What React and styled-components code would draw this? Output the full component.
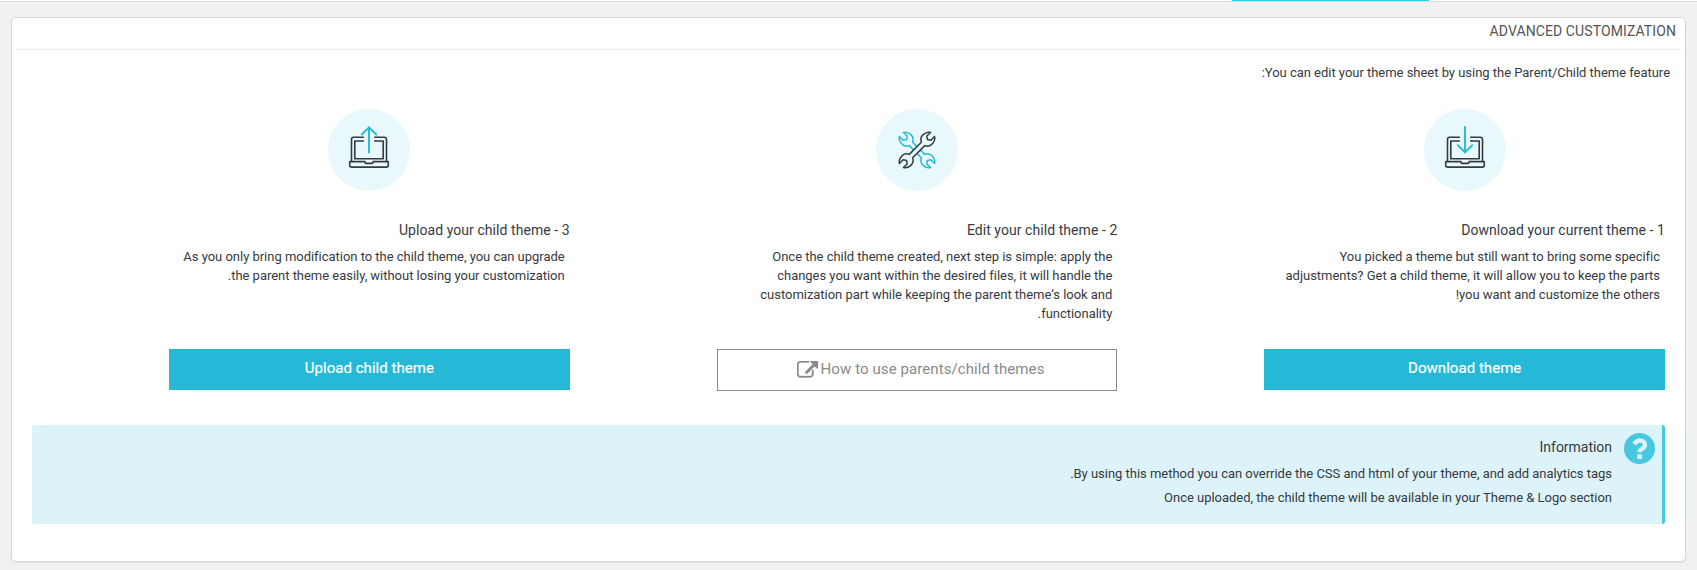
import React from "react";
import styled, { createGlobalStyle } from "styled-components";

const GlobalStyle = createGlobalStyle`
  *, *::before, *::after { box-sizing: border-box; }
  body {
    margin: 0;
    background: #eff1f2;
    color: #363a41;
    font: 400 13px/19px Roboto, "Open Sans", sans-serif;
    letter-spacing: -0.025px;
  }
  h2, h3, h4, p { margin: 0; font-weight: 400; }
`;

const Page = styled.div`
  height: 570px;
  overflow: hidden;
`;

const TabStrip = styled.div`
  height: 2px;
  background: #fff;
  border-bottom: 1px solid #d9dddd;
  padding-right: 268px;
`;

const ActiveTab = styled.div`
  width: 197px;
  height: 1px;
  background: #25d0f0;
`;

const Panel = styled.section`
  height: 545px;
  margin: 15px 11px 0;
  padding: 0 4px;
  background: #fff;
  border: 1px solid #d3d8db;
  border-radius: 5px;
  box-shadow: 0 1px 1px rgba(0, 0, 0, 0.05);
`;

const PanelHeading = styled.h2`
  height: 32px;
  padding: 0 5px;
  border-bottom: 1px solid #eaedef;
  font-size: 14px;
  line-height: 27px;
  letter-spacing: 0.1px;
  color: #555;
  text-transform: uppercase;
`;

const Intro = styled.p`
  padding: 13px 11px 0;
  margin-bottom: 27px;
`;

const Steps = styled.div`
  display: grid;
  grid-template-columns: repeat(3, 1fr);
  padding: 0 6px 0 16px;
`;

const Step = styled.article`
  display: flex;
  flex-direction: column;
  padding: 0 10px 0 137px;
`;

const IconCircle = styled.div`
  align-self: center;
  width: 82px;
  height: 82px;
  border-radius: 50%;
  background: #e8f8fb;
  svg { display: block; }
`;

const StepTitle = styled.h3`
  margin-top: 29px;
  font-size: 14px;
  line-height: 20px;
  letter-spacing: 0.06px;
`;

const StepText = styled.p`
  height: 76px;
  margin: 7px 0 26px;
  padding: 0 5px;
`;

const Button = styled.a`
  display: flex;
  align-items: center;
  justify-content: center;
  gap: 3px;
  height: ${(p) => (p.$outline ? 42 : 41)}px;
  padding: ${(p) => (p.$outline ? "0 0 1px 7px" : "0 0 3px")};
  font-size: 15px;
  letter-spacing: ${(p) => (p.$outline ? 0.09 : 0.04)}px;
  color: ${(p) => (p.$outline ? "#8a8a8a" : "#fff")};
  background: ${(p) => (p.$outline ? "#fff" : "#25b9d7")};
  border: ${(p) => (p.$outline ? "1px solid #8a8a8a" : "0")};
  -webkit-text-stroke: ${(p) => (p.$outline ? "0" : "0.2px #fff")};
`;

const Info = styled.aside`
  display: flex;
  height: 99px;
  margin: 34px 16px 0;
  padding: 8px 7px;
  gap: 12px;
  background: #dcf3f9;
  border-right: 3px solid #4ac7e0;
  border-radius: 3px;
`;

const InfoBody = styled.div`
  padding-top: 4px;
  p { line-height: 24px; }
`;

const InfoTitle = styled.h4`
  font-size: 14px;
  line-height: 20px;
  margin-bottom: 5px;
`;

function Laptop({ up }) {
  return (
    <svg width="82" height="82" viewBox="9 9 82 82" fill="none" strokeLinecap="round" strokeLinejoin="round">
      <g stroke="#363a41" strokeWidth="1.6">
        <path d="M44.3 37.3H34.7Q32.5 37.3 32.5 39.5V61.5M55.7 37.3H65.3Q67.5 37.3 67.5 39.5V61.5" />
        <path d="M44.3 41H35.8V58.7H64.2V41H55.7" />
        <path d="M30.7 61.6H46V62.3Q46 63.4 47.2 63.4H52.8Q54 63.4 54 62.3V61.6H69.3V65.2Q69.3 67.1 67.4 67.1H32.6Q30.7 67.1 30.7 65.2Z" />
      </g>
      <path stroke="#25b9d7" strokeWidth="1.9" d={up ? "M50 52.5V27.3M42.8 34.5L50 27.3L57.2 34.5" : "M50 27V52.4M42.8 45.2L50 52.4L57.2 45.2"} />
    </svg>
  );
}

const WRENCH =
  "M-8.6 -2.4H8.6C9.8 -5 12.3 -6.7 15.2 -6.5C18.3 -6.3 20.8 -5 22 -2.8L16.8 -2.9L14.8 0L16.8 2.9L22 2.8C20.8 5 18.3 6.3 15.2 6.5C12.3 6.7 9.8 5 8.6 2.4H-8.6C-9.8 5 -12.3 6.7 -15.2 6.5C-18.3 6.3 -20.8 5 -22 2.8L-16.8 2.9L-14.8 0L-16.8 -2.9L-22 -2.8C-20.8 -5 -18.3 -6.3 -15.2 -6.5C-12.3 -6.7 -9.8 -5 -8.6 -2.4Z";

function Wrenches() {
  return (
    <svg width="82" height="82" viewBox="-41 -41 82 82" fill="#e8f8fb" strokeWidth="1.5" strokeLinejoin="round">
      <path d={WRENCH} transform="rotate(45)" stroke="#25b9d7" />
      <path d={WRENCH} transform="rotate(-45)" stroke="#363a41" />
    </svg>
  );
}

function ExternalLink() {
  return (
    <svg width="21" height="18" viewBox="0 0 1792 1536" fill="currentColor">
      <path d="M1408 800v320q0 119-84.500 203.500t-203.500 84.500h-832q-119 0-203.500-84.500t-84.500-203.500v-832q0-119 84.500-203.500t203.500-84.500h704q14 0 23 9t9 23v64q0 14-9 23t-23 9h-704q-66 0-113 47t-47 113v832q0 66 47 113t113 47h832q66 0 113-47t47-113v-320q0-14 9-23t23-9h64q14 0 23 9t9 23zm384-736v512q0 26-19 45t-45 19-45-19l-176-176-652 652q-10 10-23 10t-23-10l-114-114q-10-10-10-23t10-23l652-652-176-176q-19-19-19-45t19-45 45-19h512q26 0 45 19t19 45z" stroke="currentColor" strokeWidth="30" />
    </svg>
  );
}

function Help() {
  return (
    <svg width="31" height="31" viewBox="0 0 31 31">
      <circle cx="15.500" cy="15.500" r="15.500" fill="#4ac7e0" />
      <path d="M10.300 11.200C11.700 8.800 13.400 7.500 15.800 7.500C18.600 7.500 21 9.400 21 12C21 15.700 15.600 15.500 15.600 19.300" fill="none" stroke="#dcf3f9" strokeWidth="4.400" />
      <rect x="13.300" y="21.300" width="4.700" height="4.700" rx=".5" fill="#dcf3f9" />
    </svg>
  );
}

export default function App() {
  return (
    <Page dir="rtl">
      <GlobalStyle />
      <TabStrip><ActiveTab /></TabStrip>
      <Panel>
        <PanelHeading>Advanced Customization</PanelHeading>
        <Intro>You can edit your theme sheet by using the Parent/Child theme feature:</Intro>
        <Steps>
          <Step>
            <IconCircle><Laptop /></IconCircle>
            <StepTitle>1 - Download your current theme</StepTitle>
            <StepText>You picked a theme but still want to bring some specific adjustments? Get a child theme, it will allow you to keep the parts you want and customize the others!</StepText>
            <Button>Download theme</Button>
          </Step>
          <Step>
            <IconCircle><Wrenches /></IconCircle>
            <StepTitle>2 - Edit your child theme</StepTitle>
            <StepText>Once the child theme created, next step is simple: apply the changes you want within the desired files, it will handle the customization part while keeping the parent theme‘s look and functionality.</StepText>
            <Button $outline>How to use parents/child themes<ExternalLink /></Button>
          </Step>
          <Step>
            <IconCircle><Laptop up /></IconCircle>
            <StepTitle>3 - Upload your child theme</StepTitle>
            <StepText>As you only bring modification to the child theme, you can upgrade the parent theme easily, without losing your customization.</StepText>
            <Button>Upload child theme</Button>
          </Step>
        </Steps>
        <Info>
          <Help />
          <InfoBody>
            <InfoTitle>Information</InfoTitle>
            <p>By using this method you can override the CSS and html of your theme, and add analytics tags.</p>
            <p>Once uploaded, the child theme will be available in your Theme &amp; Logo section</p>
          </InfoBody>
        </Info>
      </Panel>
    </Page>
  );
}
